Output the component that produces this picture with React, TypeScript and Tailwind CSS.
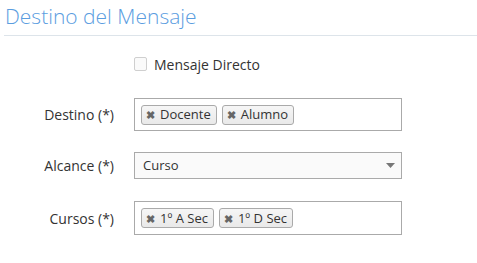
const font = { fontFamily: '"Open Sans", "Liberation Sans", sans-serif' };

const Tag = ({ text }: { text: string }) => (
  <span className="flex h-[20px] items-center gap-[5px] rounded-[3px] border border-[#aaaaaa] bg-gradient-to-b from-[#f6f6f6] to-[#e9e9e9] pl-[4px] pr-[5px] text-[13px] leading-none text-[#333333]">
    <span className="text-[11px] font-bold text-[#666666]">✖</span>
    {text}
  </span>
);

const Row = ({ label, children, className }: { label: string; children: React.ReactNode; className?: string }) => (
  <div className={"flex items-center " + (className ?? "")}>
    <label className="w-[114px] text-right text-[14px] text-[#333333]">{label}</label>
    <div className="ml-[20px] w-[268px]">{children}</div>
  </div>
);

const App = () => {
  return (
    <div className="h-[263px] w-[477px] bg-white" style={font}>
      <div className="ml-[4px] border-b border-[#dde4ea] pt-[2px] pb-[5px]">
        <h2 className="pl-[1px] text-[21px] font-light leading-[28px] text-[#5b9ddf]">Destino del Mensaje</h2>
      </div>

      <div className="mt-[16px] flex h-[24px] items-center pl-[134px]">
        <span className="h-[14px] w-[13px] rounded-[2px] border border-[#cfcfcf] bg-[#fafafa]" />
        <span className="ml-[7px] text-[14px] text-[#333333]">Mensaje Directo</span>
      </div>

      <Row label="Destino (*)" className="mt-[22px]">
        <div className="flex h-[33px] items-center gap-[5px] border border-[#aaaaaa] bg-white pl-[6px]">
          <Tag text="Docente" />
          <Tag text="Alumno" />
        </div>
      </Row>

      <Row label="Alcance (*)" className="mt-[21px]">
        <div className="flex h-[27px] items-center justify-between border border-[#aaaaaa] bg-[#fafafa] pl-[8px] pr-[6px] text-[13px] text-[#333333]">
          <span>Curso</span>
          <svg width="9" height="5" viewBox="0 0 9 5">
            <path d="M0 0h9L4.5 5z" fill="#777777" />
          </svg>
        </div>
      </Row>

      <Row label="Cursos (*)" className="mt-[22px]">
        <div className="flex h-[34px] items-center gap-[5px] border border-[#aaaaaa] bg-white pl-[6px]">
          <Tag text="1º A Sec" />
          <Tag text="1º D Sec" />
        </div>
      </Row>
    </div>
  );
};

export default App;
